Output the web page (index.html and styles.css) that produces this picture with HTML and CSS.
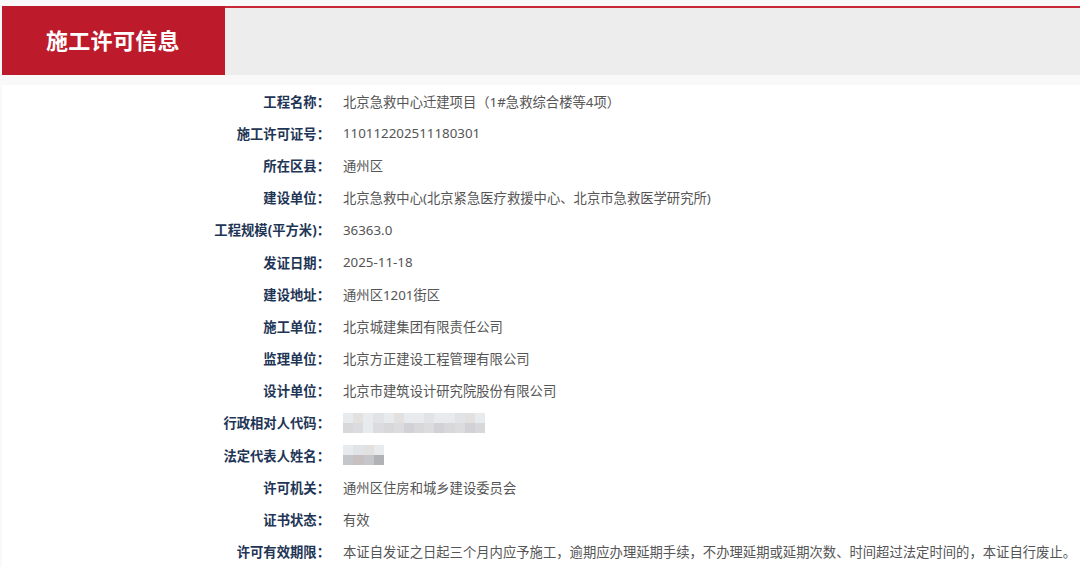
FILE: index.html
```html
<!DOCTYPE html>
<html lang="zh-CN">
<head>
    <meta charset="UTF-8">
    <meta name="viewport" content="width=device-width, initial-scale=1.0">
    <title>施工许可信息</title>
    <link rel="stylesheet" href="styles.css">
</head>
<body>

<!-- 标题栏 -->
<header class="title-bar">
    <h1 class="title-tab">施工许可信息</h1>
    <div class="title-rest"></div>
</header>

<!-- 许可详情 -->
<div class="detail-panel">
    <div class="row"><span class="label">工程名称：</span><span class="value">北京急救中心迁建项目（1#急救综合楼等4项）</span></div>
    <div class="row"><span class="label">施工许可证号：</span><span class="value">110112202511180301</span></div>
    <div class="row"><span class="label">所在区县：</span><span class="value">通州区</span></div>
    <div class="row"><span class="label">建设单位：</span><span class="value">北京急救中心(北京紧急医疗救援中心、北京市急救医学研究所)</span></div>
    <div class="row"><span class="label">工程规模(平方米)：</span><span class="value">36363.0</span></div>
    <div class="row"><span class="label">发证日期：</span><span class="value">2025-11-18</span></div>
    <div class="row"><span class="label">建设地址：</span><span class="value">通州区1201街区</span></div>
    <div class="row"><span class="label">施工单位：</span><span class="value">北京城建集团有限责任公司</span></div>
    <div class="row"><span class="label">监理单位：</span><span class="value">北京方正建设工程管理有限公司</span></div>
    <div class="row"><span class="label">设计单位：</span><span class="value">北京市建筑设计研究院股份有限公司</span></div>
    <div class="row">
        <span class="label">行政相对人代码：</span>
        <span class="mosaic mosaic-wide">
            <i class="c1"></i><i class="c2"></i><i class="c1"></i><i class="c3"></i><i class="c1"></i><i class="c2"></i><i class="c1"></i><i class="c1"></i><i class="c3"></i><i class="c1"></i><i class="c1"></i><i class="c3"></i><i class="c2"></i><i class="c1"></i>
            <i class="c4"></i><i class="c5"></i><i class="c1"></i><i class="c5"></i><i class="c4"></i><i class="c5"></i><i class="c6"></i><i class="c4"></i><i class="c5"></i><i class="c6"></i><i class="c4"></i><i class="c5"></i><i class="c6"></i><i class="c4"></i>
        </span>
    </div>
    <div class="row">
        <span class="label">法定代表人姓名：</span>
        <span class="mosaic mosaic-short">
            <i class="c1"></i><i class="c3"></i><i class="c2"></i><i class="c1"></i>
            <i class="d1"></i><i class="d2"></i><i class="d1"></i><i class="d3"></i>
        </span>
    </div>
    <div class="row"><span class="label">许可机关：</span><span class="value">通州区住房和城乡建设委员会</span></div>
    <div class="row"><span class="label">证书状态：</span><span class="value">有效</span></div>
    <div class="row"><span class="label">许可有效期限：</span><span class="value">本证自发证之日起三个月内应予施工，逾期应办理延期手续，不办理延期或延期次数、时间超过法定时间的，本证自行废止。</span></div>
</div>

</body>
</html>
```

FILE: styles.css
```css
body {
    font-family: "Noto Sans", "Noto Sans CJK SC", sans-serif;
    background-color: #f9f9f9;
    margin: 0;
    padding: 0;
    overflow: hidden;
}
.title-bar {
    display: flex;
    height: 69px;
    margin: 6px 0 0 2px;
}
.title-tab {
    width: 223px;
    margin: 0;
    background-color: #bd1b2c;
    color: white;
    font-size: 22px;
    font-weight: bold;
    line-height: 69px;
    padding-left: 44px;
    box-sizing: border-box;
    letter-spacing: 0.3px;
}
.title-rest {
    flex: 1;
    background-color: #ededed;
    border-top: 2px solid #c7283a;
}
.detail-panel {
    margin: 10px 0 0 2px;
    background-color: white;
    height: 500px;
}
.row {
    display: flex;
    align-items: center;
    height: 32.2px;
    font-size: 13.33px;
}
.label {
    width: 328px;
    text-align: right;
    font-weight: bold;
    color: #1e3556;
    flex-shrink: 0;
}
.value {
    margin-left: 13px;
    color: #555;
    white-space: nowrap;
}
.mosaic {
    display: grid;
    margin-left: 13px;
    grid-auto-rows: 10px;
    filter: blur(0.6px);
}
.mosaic i {
    display: block;
}
.mosaic-wide {
    grid-template-columns: repeat(14, 10.15px);
}
.mosaic-short {
    grid-template-columns: repeat(4, 10.25px);
}
.c1 { background-color: #e8ebee; }
.c2 { background-color: #e3e0e0; }
.c3 { background-color: #e0e4e8; }
.c4 { background-color: #d8d8da; }
.c5 { background-color: #dcdcdf; }
.c6 { background-color: #d2d2d6; }
.d1 { background-color: #c4c6cc; }
.d2 { background-color: #c8c0c0; }
.d3 { background-color: #b2b2b6; }
```
